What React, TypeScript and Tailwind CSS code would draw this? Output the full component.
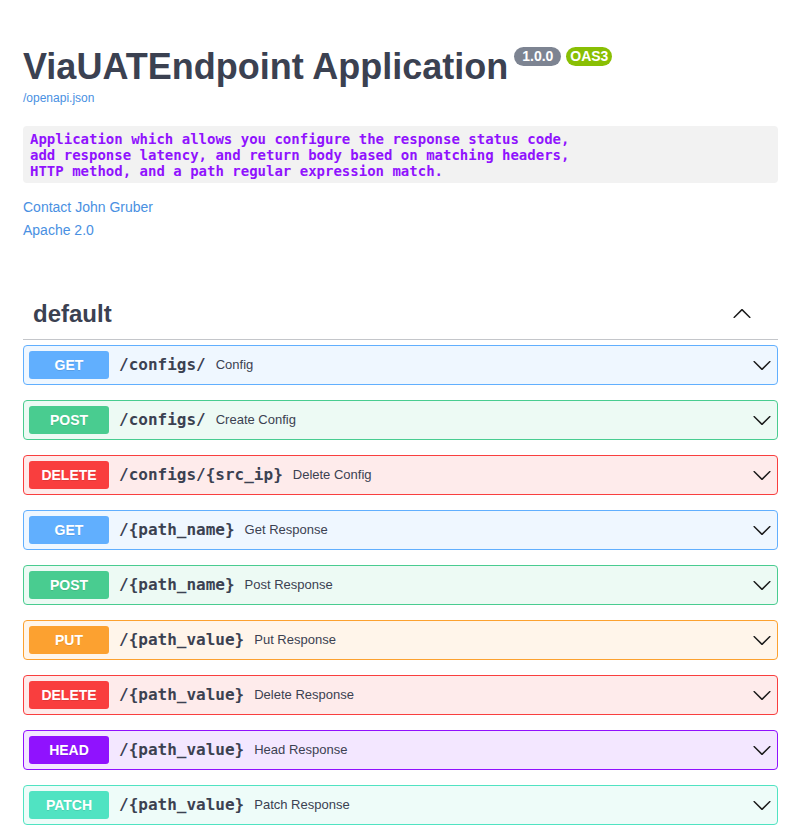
import React from 'react';

type Method = 'GET' | 'POST' | 'DELETE' | 'PUT' | 'HEAD' | 'PATCH';

const TONE: Record<Method, { box: string; badge: string }> = {
  GET: { box: 'border-[#61affe] bg-[#eff7ff]', badge: 'bg-[#61affe]' },
  POST: { box: 'border-[#49cc90] bg-[#edfaf4]', badge: 'bg-[#49cc90]' },
  DELETE: { box: 'border-[#f93e3e] bg-[#feebeb]', badge: 'bg-[#f93e3e]' },
  PUT: { box: 'border-[#fca130] bg-[#fff5ea]', badge: 'bg-[#fca130]' },
  HEAD: { box: 'border-[#9012fe] bg-[#f3e7ff]', badge: 'bg-[#9012fe]' },
  PATCH: { box: 'border-[#50e3c2] bg-[#eefcf9]', badge: 'bg-[#50e3c2]' },
};

const OPS: { method: Method; path: string; summary: string }[] = [
  { method: 'GET', path: '/configs/', summary: 'Config' },
  { method: 'POST', path: '/configs/', summary: 'Create Config' },
  { method: 'DELETE', path: '/configs/{src_ip}', summary: 'Delete Config' },
  { method: 'GET', path: '/{path_name}', summary: 'Get Response' },
  { method: 'POST', path: '/{path_name}', summary: 'Post Response' },
  { method: 'PUT', path: '/{path_value}', summary: 'Put Response' },
  { method: 'DELETE', path: '/{path_value}', summary: 'Delete Response' },
  { method: 'HEAD', path: '/{path_value}', summary: 'Head Response' },
  { method: 'PATCH', path: '/{path_value}', summary: 'Patch Response' },
];

function Arrow({ up = false }: { up?: boolean }) {
  return (
    <svg width="20" height="20" viewBox="0 0 20 20" className={up ? 'rotate-180' : ''} fill="#1a1a1a">
      <path d="M17.418 6.109c.272-.268.709-.268.979 0s.271.701 0 .969l-7.908 7.83c-.27.268-.707.268-.979 0l-7.908-7.83c-.27-.268-.27-.701 0-.969.271-.268.709-.268.979 0L10 13.25l7.418-7.141z" />
    </svg>
  );
}

export default function App() {
  return (
    <div className="min-h-screen bg-white pl-[23px] pr-[15px] pb-[20px] font-['Liberation_Sans',Arial,sans-serif] text-[#3b4151]">
      {/* info */}
      <div className="pt-[47px]">
        <div className="flex items-start">
          <h2 className="text-[36px] leading-[40px] font-bold">ViaUATEndpoint Application</h2>
          <span className="ml-[6px] h-[19px] whitespace-pre rounded-full bg-[#7d8492] px-[4px] text-[14px] leading-[19px] font-bold text-white">{' 1.0.0 '}</span>
          <span className="ml-[5px] h-[19px] rounded-full bg-[#89bf04] px-[4px] text-[14px] leading-[19px] font-bold text-white">OAS3</span>
        </div>
        <a className="mt-[4px] block text-[12px] leading-[14px] text-[#4990e2]">/openapi.json</a>
      </div>

      <pre className="mt-[21px] rounded-[4px] bg-[#f2f2f2] px-[7px] pt-[5px] pb-[4px] font-['DejaVu_Sans_Mono',monospace] text-[14px] leading-[16px] font-bold text-[#9012fe]">
        {'Application which allows you configure the response status code,\nadd response latency, and return body based on matching headers,\nHTTP method, and a path regular expression match.'}
      </pre>

      <div className="mt-[16px] text-[14px] leading-[16px] text-[#4990e2]">
        <a className="block">Contact John Gruber</a>
        <a className="mt-[7px] block">Apache 2.0</a>
      </div>

      {/* tag section */}
      <div className="mt-[51px] flex items-center justify-between border-b border-[#3b41514d] pt-[10px] pb-[10px] pl-[10px] pr-[26px]">
        <h3 className="text-[24px] leading-[30px] font-bold">default</h3>
        <Arrow up />
      </div>

      <div className="mt-[5px] flex flex-col gap-[15px]">
        {OPS.map((op, i) => (
          <div key={i} className={`flex h-[40px] items-center rounded-[4px] border px-[5px] ${TONE[op.method].box}`}>
            <span className={`flex h-[28px] w-[80px] shrink-0 items-center justify-center rounded-[3px] text-[14px] font-bold text-white [text-shadow:0_1px_0_rgba(0,0,0,0.1)] ${TONE[op.method].badge}`}>
              {op.method}
            </span>
            <span className="px-[10px] font-['DejaVu_Sans_Mono',monospace] text-[16px] font-bold">{op.path}</span>
            <span className="flex-1 text-[13px]">{op.summary}</span>
            <Arrow />
          </div>
        ))}
      </div>
    </div>
  );
}
